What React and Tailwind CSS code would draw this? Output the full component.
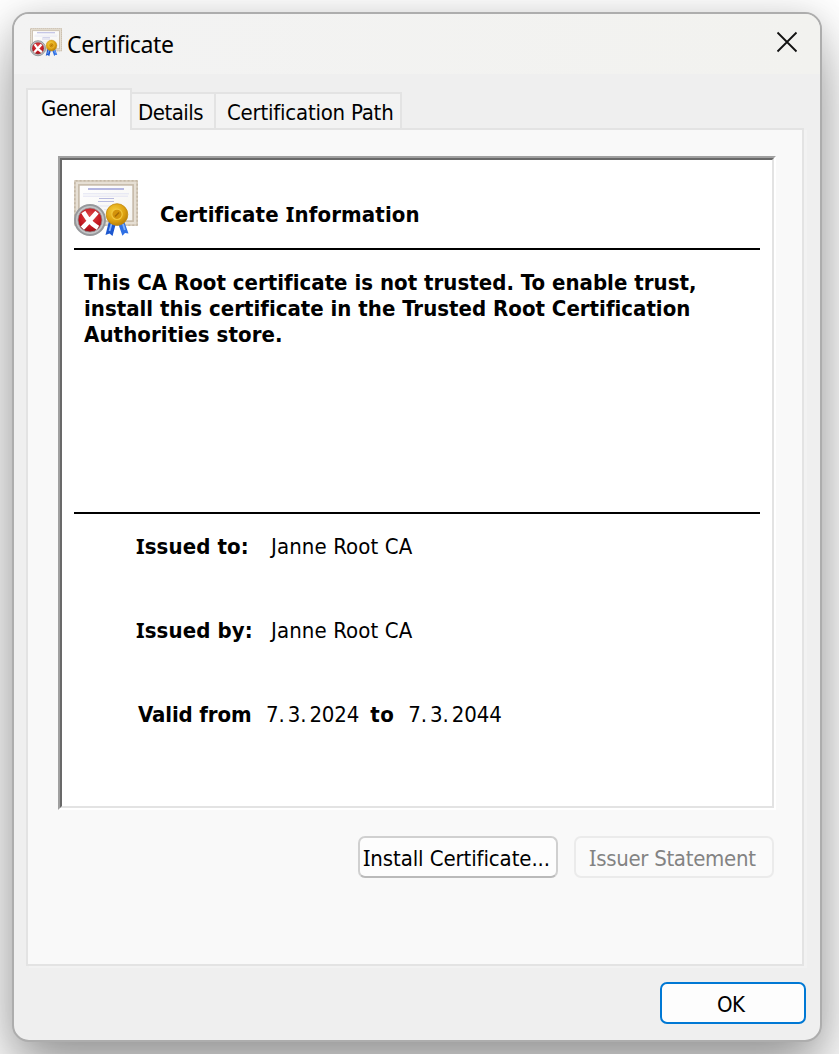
import React from "react";

function CertificateIcon({ className }) {
  return (
    <svg className={className} viewBox="0 0 64 57" fill="none" aria-hidden="true">
      <defs>
        <linearGradient id="paper" x1="0" y1="0" x2="1" y2="1">
          <stop offset="0" stopColor="#ffffff" />
          <stop offset="1" stopColor="#f4f3f0" />
        </linearGradient>
        <radialGradient id="red" cx="0.5" cy="0.35" r="0.7">
          <stop offset="0" stopColor="#e04a4a" />
          <stop offset="0.6" stopColor="#c41a22" />
          <stop offset="1" stopColor="#8e0f14" />
        </radialGradient>
        <radialGradient id="gold" cx="0.4" cy="0.35" r="0.7">
          <stop offset="0" stopColor="#f7cf3e" />
          <stop offset="0.65" stopColor="#dca00f" />
          <stop offset="1" stopColor="#b47c08" />
        </radialGradient>
      </defs>
      <rect width="64" height="46" rx="1" fill="#d9cfc0" />
      <rect x="0.8" y="0.8" width="62.4" height="44.4" rx="0.8" stroke="#c4b8a6" strokeWidth="1.6" strokeDasharray="2 2" />
      <rect x="2" y="2" width="60" height="42" fill="#e6dfd4" />
      <rect x="4.9" y="4.9" width="54.2" height="36.2" fill="url(#paper)" stroke="#c6baa8" strokeWidth="1.6" />
      <path d="M14 9h36" stroke="#b4b6e0" strokeWidth="2" />
      <path d="M9 13.8h46M9 16.2h45" stroke="#e2e3f2" strokeWidth="1" />
      <path d="M25 18.500h15M24 21.500h16" stroke="#b9bbe0" strokeWidth="1.2" />
      <path d="M16 26h33M30 29.500h22" stroke="#e4e5f3" strokeWidth="1.2" />
      <path d="M35 41 31.500 55l4-1.500 3 2.500L42 43Z" fill="#1c57cf" />
      <path d="M50 41 54.500 53.500l-3.500-.5-2.600 2.700L44 43Z" fill="#2f70e4" />
      <path d="M37.500 44 35.500 51M49 44l1.800 6" stroke="#83b2fa" strokeWidth="1.800" />
      <circle cx="43" cy="34.500" r="10.800" fill="url(#gold)" stroke="#c48a0c" strokeWidth="0.800" />
      <circle cx="43" cy="34.300" r="5.200" fill="#d3930b" stroke="#f2c840" strokeWidth="1.200" />
      <path d="M41 36.500 45 32.500" stroke="#a36a05" strokeWidth="1.400" />
      <circle cx="16" cy="40" r="15" fill="#c2c4c6" stroke="#96989b" strokeWidth="2" />
      <circle cx="16" cy="40" r="12" fill="url(#red)" stroke="#8f8f91" strokeWidth="0.800" />
      <path d="M10.500 34c3 5 6.500 9.500 11.500 12.500M21.500 34c-3.500 4-7.500 8.500-11.500 12.500" stroke="#fff" strokeWidth="4.600" strokeLinecap="square" />
    </svg>
  );
}

function Label({ children, className = "" }) {
  return (
    <span className={`whitespace-pre ${className}`}>
      {children.split(/(I)/).map((part, i) =>
        part === "I" ? (
          <span key={i} className="font-['Noto_Sans',sans-serif] leading-[0]">I</span>
        ) : (
          part
        ),
      )}
    </span>
  );
}

function DateText({ day, month, year }) {
  return (
    <span className="flex gap-[3px] tracking-[-0.1px]">
      <span>{day}.</span>
      <span>{month}.</span>
      <span>{year}</span>
    </span>
  );
}

function Field({ label, value, labelClass }) {
  return (
    <div className="flex">
      <b className="w-[135px] shrink-0">
        <Label className={labelClass}>{label}</Label>
      </b>
      <Label className="tracking-[0.12px]">{value}</Label>
    </div>
  );
}

function TitleBar() {
  return (
    <header className="flex h-[60px] shrink-0 bg-linear-to-r from-[#f3f3f3] to-[#f2f2ef] pt-[13px] pl-4">
      <CertificateIcon className="h-[31px] w-8 shrink-0" />
      <h1 className="mt-[1px] ml-[5px] font-['Noto_Sans',sans-serif] text-[23px] leading-[32px] tracking-[-0.33px]">Certificate</h1>
      <button className="mt-[4px] mr-[22px] ml-auto size-[22px]" aria-label="Close">
        <svg viewBox="0 0 22 22" className="size-[22px]" fill="none" stroke="#111" strokeWidth="1.8">
          <path d="M1.500 1.500l19 19M20.500 1.500l-19 19" />
        </svg>
      </button>
    </header>
  );
}

function Tabs() {
  return (
    <nav className="relative z-10 -mb-[2px] flex h-[42px] items-end">
      <div className="h-[42px] w-[106px] border-2 border-b-0 border-[#e3e3e3] bg-[#f9f9f9] pt-[6px] pl-[13px] tracking-[-0.42px]">General</div>
      <div className="mb-[2px] h-[36px] w-[84px] border-t-2 border-r-2 border-[#e3e3e3] bg-[#f3f3f3] pt-[6px] pl-[6px] tracking-[-0.5px]">Details</div>
      <div className="mb-[2px] h-[36px] w-[186px] border-t-2 border-r-2 border-[#e3e3e3] bg-[#f3f3f3] pt-[6px] pl-[11px] tracking-[-0.22px]">Certification Path</div>
    </nav>
  );
}

function CertificatePanel() {
  return (
    <div className="h-[654px] w-[718px] border-2 border-t-[#a0a0a0] border-r-white border-b-white border-l-[#a0a0a0]">
      <div className="h-full border-2 border-t-[#696969] border-r-[#e3e3e3] border-b-[#e3e3e3] border-l-[#696969] bg-white px-3">
        <div className="flex h-[90px] border-b-2 border-black pt-5">
          <CertificateIcon className="h-[57px] w-16 shrink-0" />
          <b className="mt-[22px] ml-[22px]">
            <Label className="tracking-[0.13px]">Certificate Information</Label>
          </b>
        </div>
        <div className="flex h-[264px] flex-col border-b-2 border-black pt-[20px] pl-[10px] font-bold">
          <Label className="tracking-[0.02px]">This CA Root certificate is not trusted. To enable trust,</Label>
          <Label className="tracking-[0.01px]">install this certificate in the Trusted Root Certification</Label>
          <Label className="tracking-[0.09px]">Authorities store.</Label>
        </div>
        <div className="flex flex-col gap-[58px] pt-[20px] pl-[62px]">
          <Field label="Issued to:" value="Janne Root CA" labelClass="tracking-[0.1px]" />
          <Field label="Issued by:" value="Janne Root CA" labelClass="tracking-[0.12px]" />
          <div className="flex pl-[2px]">
            <b className="w-[128px] tracking-[-0.12px]">Valid from</b>
            <DateText day="7" month="3" year="2024" />
            <b className="ml-[11px] w-[38px] tracking-[0.4px]">to</b>
            <DateText day="7" month="3" year="2044" />
          </div>
        </div>
      </div>
    </div>
  );
}

export default function App() {
  return (
    <div className="h-[1054px] w-[839px] overflow-hidden bg-white pt-3 pl-3 font-['DejaVu_Sans_Condensed','DejaVu_Sans',sans-serif] text-[22px] leading-[26px] text-black [font-stretch:condensed]">
      <div className="flex h-[1030px] w-[810px] flex-col overflow-hidden rounded-[17px] border-2 border-[#adadad] bg-[#efefef] shadow-[0_32px_60px_rgba(0,0,0,0.38),0_0_30px_rgba(0,0,0,0.1)]">
        <TitleBar />
        <div className="px-3 pt-[14px]">
          <Tabs />
          <main className="flex h-[838px] w-[778px] flex-col border-2 border-[#e3e3e3] bg-[#f9f9f9] pt-[26px] pl-[30px] shadow-[3px_2px_0_#f2f2f2]">
            <CertificatePanel />
            <div className="mt-[26px] flex gap-4 pl-[300px]">
              <button className="h-[42px] w-[200px] rounded-[7px] border-2 border-[#d0d0d0] border-b-[#bababa] bg-[#fdfdfd] pt-[3px] pl-[3px] text-left">
                <Label className="tracking-[-0.1px]">Install Certificate...</Label>
              </button>
              <button className="h-[42px] w-[200px] rounded-[7px] border-2 border-[#ebebeb] bg-[#fafafa] pt-[3px] pl-[13px] text-left text-[#838383]">
                <Label className="tracking-[-0.3px]">Issuer Statement</Label>
              </button>
            </div>
          </main>
          <div className="mt-4 flex justify-end pr-[2px]">
            <button className="h-[42px] w-[146px] rounded-[7px] border-2 border-[#0078d4] bg-[#fdfdfd] pt-[3px] pl-[55px] text-left tracking-[-0.6px]">OK</button>
          </div>
        </div>
      </div>
    </div>
  );
}
